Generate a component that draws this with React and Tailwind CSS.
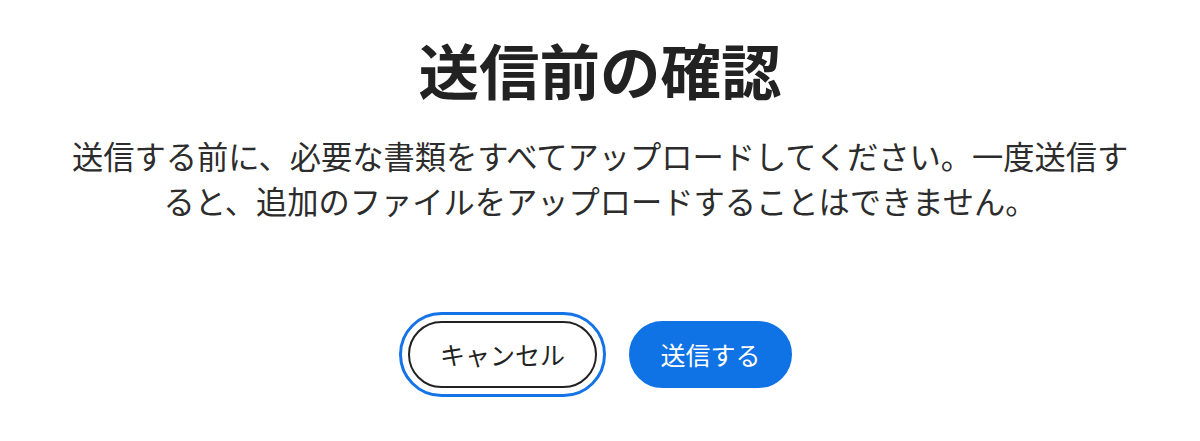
export default function App() {
  return (
    <div
      className="flex min-h-[441px] w-full flex-col items-center bg-white pt-[31px] text-[#222222]"
      style={{ fontFamily: '"Noto Sans CJK JP", "Noto Sans", sans-serif' }}
    >
      {/* Title */}
      <h1 className="text-[60.5px] font-bold leading-[76px]">送信前の確認</h1>

      {/* Message */}
      <p className="mt-[26px] max-w-[1075px] text-center text-[31.25px] leading-[45px] text-[#2c2c2c]">
        送信する前に、必要な書類をすべてアップロードしてください。一度送信すると、追加のファイルをアップロードすることはできません。
      </p>

      {/* Buttons */}
      <div className="mt-[98px] flex items-center gap-[32px]">
        <button className="h-[67px] rounded-full border-2 border-[#222222] bg-white px-[30px] text-[25px] text-[#222222] outline-[3px] outline-offset-[6px] outline-[#1473e6] outline-solid">
          キャンセル
        </button>
        <button className="h-[67px] rounded-full border-2 border-[#0f72e5] bg-[#0f72e5] px-[29.5px] text-[25px] text-white">
          送信する
        </button>
      </div>
    </div>
  );
}
